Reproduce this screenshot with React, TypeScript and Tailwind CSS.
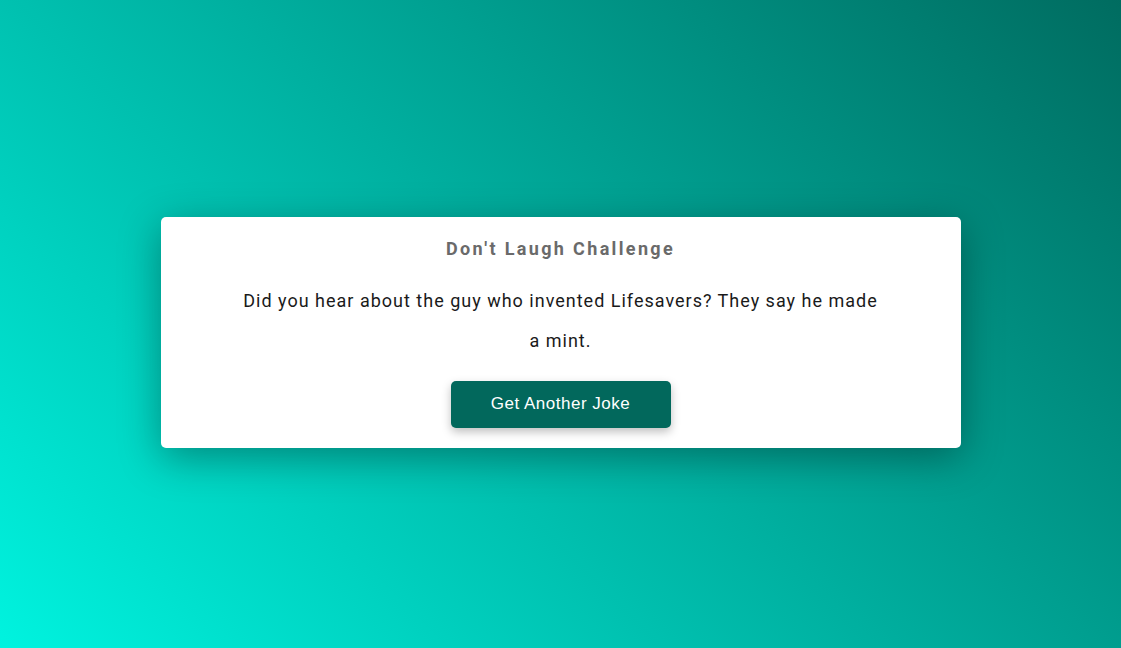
export default function App() {
  return (
    <div className="min-h-screen w-full pt-4 flex items-center justify-center bg-[linear-gradient(45deg,#00f3df,#006c60)] font-['Roboto',sans-serif]">
      <div className="w-[800px] bg-white rounded-[5px] shadow-[0_10px_40px_rgba(0,0,0,0.35)] pt-5 pb-5 flex flex-col items-center">
        <h3 className="text-[18px] leading-6 font-bold tracking-[2.35px] text-[#6a6a6a]">
          Don't Laugh Challenge
        </h3>
        <p className="mt-5 px-20 text-center text-[18px] leading-10 tracking-[1px] text-[#1a1a1a]">
          Did you hear about the guy who invented Lifesavers? They say he made a mint.
        </p>
        <button className="mt-5 w-[220px] h-[47px] rounded-[5px] bg-[#02685c] text-white text-[17px] tracking-[0.5px] font-['Liberation_Sans',Arial,sans-serif] shadow-[0_4px_10px_rgba(0,0,0,0.25)]">
          Get Another Joke
        </button>
      </div>
    </div>
  );
}
